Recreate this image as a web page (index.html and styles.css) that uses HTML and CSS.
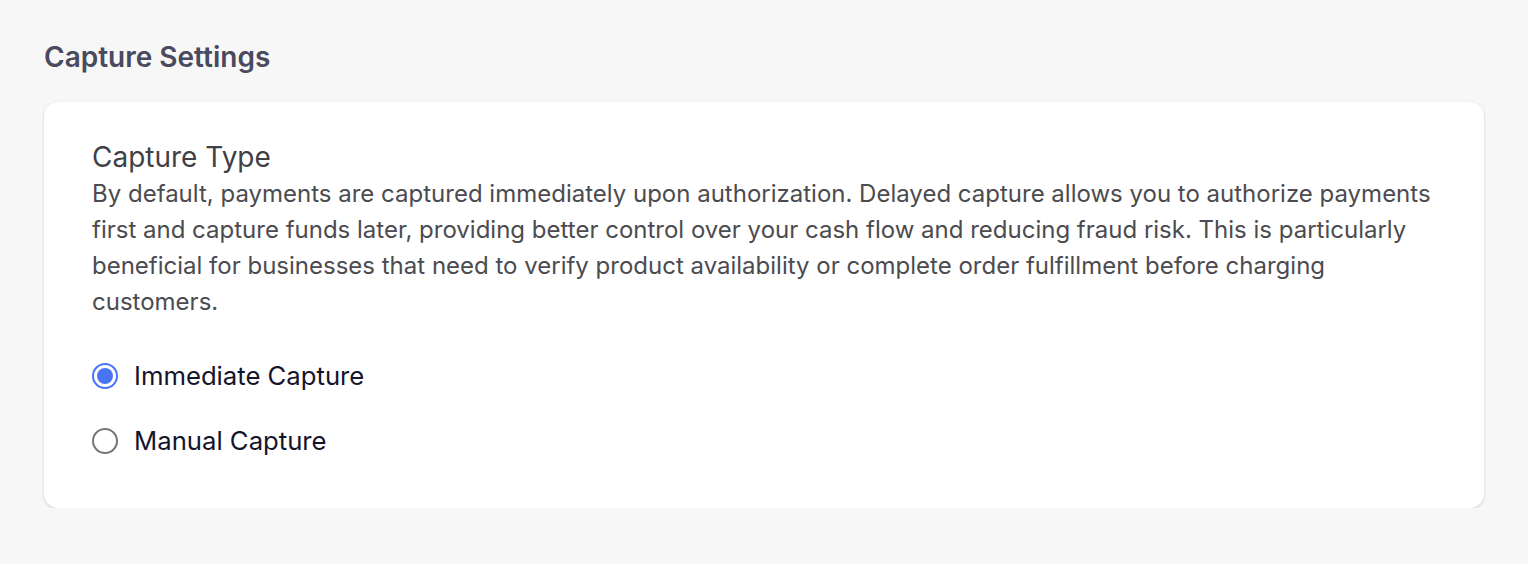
FILE: index.html
```html
<!DOCTYPE html>
<html lang="en">
<head>
<meta charset="utf-8">
<title>Capture Settings</title>
<link rel="stylesheet" href="styles.css">
</head>
<body>
<main class="page">
  <h1 class="page-title">Capture Settings</h1>
  <section class="card">
    <h2 class="card-title">Capture Type</h2>
    <p class="card-desc">By default, payments are captured immediately upon authorization. Delayed capture allows you to authorize payments first and capture funds later, providing better control over your cash flow and reducing fraud risk. This is particularly beneficial for businesses that need to verify product availability or complete order fulfillment before charging customers.</p>
    <div class="options">
      <label class="option">
        <span class="radio radio-checked"><span class="radio-dot"></span></span>
        <span class="option-label">Immediate Capture</span>
      </label>
      <label class="option">
        <span class="radio"></span>
        <span class="option-label">Manual Capture</span>
      </label>
    </div>
  </section>
</main>
</body>
</html>
```

FILE: styles.css
```css
html, body {
  margin: 0;
  padding: 0;
}
body {
  background: #f7f7f7;
  font-family: Inter, "Noto Sans", "Liberation Sans", sans-serif;
  -webkit-font-smoothing: antialiased;
}
.page {
  padding: 39px 44px 0 44px;
}
.page-title {
  margin: 0;
  font-size: 28px;
  line-height: 36px;
  font-weight: 600;
  color: #4a4a5e;
}
.card {
  margin-top: 27px;
  width: 1440px;
  box-sizing: border-box;
  background: #ffffff;
  border-radius: 14px;
  box-shadow: 0 1px 3px rgba(0, 0, 0, 0.16), 0 0 1px rgba(0, 0, 0, 0.06);
  padding: 36px 48px 49px 48px;
}
.card-title {
  margin: 0;
  font-size: 28px;
  line-height: 38px;
  font-weight: 400;
  color: #3f3f46;
}
.card-desc {
  margin: 0;
  font-size: 24px;
  line-height: 36px;
  color: #4b4b50;
}
.options {
  margin-top: 38px;
  display: flex;
  flex-direction: column;
  gap: 29px;
}
.option {
  display: flex;
  align-items: center;
  gap: 16px;
  height: 36px;
}
.radio {
  width: 26px;
  height: 26px;
  box-sizing: border-box;
  border: 2px solid #767676;
  border-radius: 50%;
  display: flex;
  align-items: center;
  justify-content: center;
  flex: none;
}
.radio-checked {
  border-color: #4875f5;
}
.radio-dot {
  width: 16px;
  height: 16px;
  border-radius: 50%;
  background: #4875f5;
}
.option-label {
  font-size: 25.7px;
  line-height: 36px;
  color: #14142b;
}
```
